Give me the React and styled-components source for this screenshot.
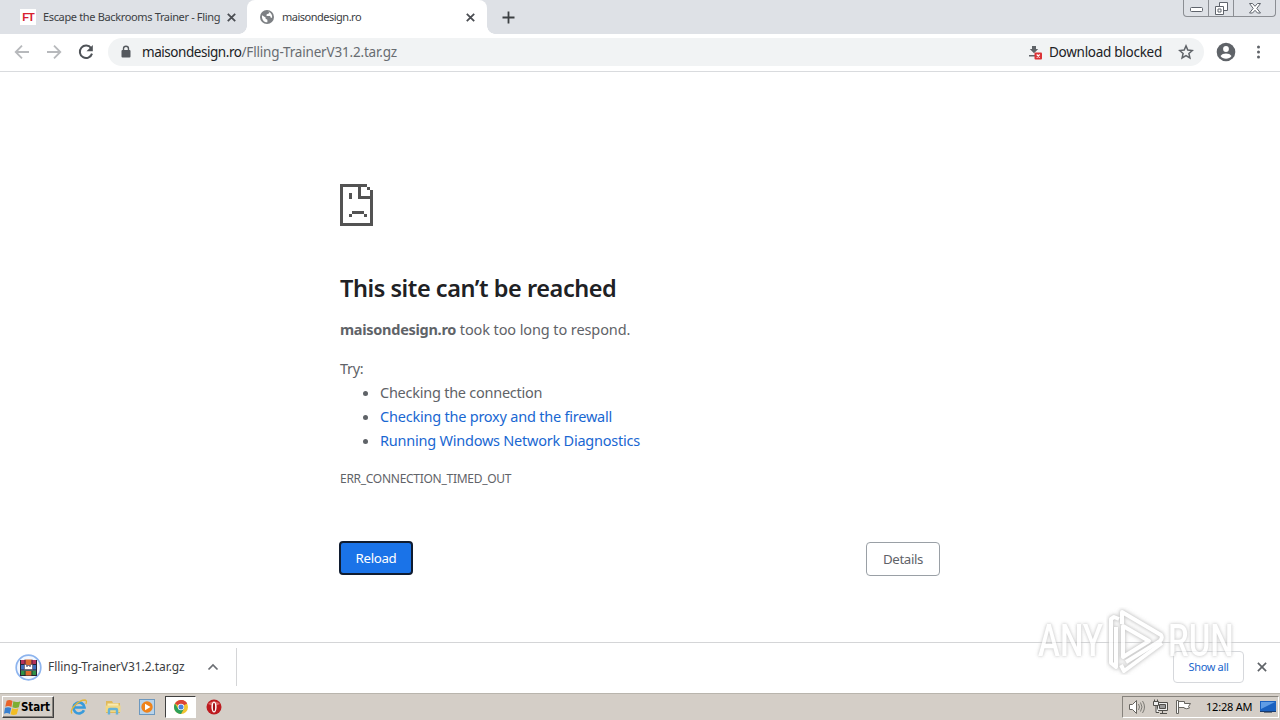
import React from "react";
import styled, { createGlobalStyle, css } from "styled-components";

const GlobalStyle = createGlobalStyle`
  * {
    box-sizing: border-box;
  }
  body {
    margin: 0;
    overflow: hidden;
    background: #fff;
    font-family: "Noto Sans", "Open Sans", sans-serif;
  }
  button {
    font-family: inherit;
    padding: 0;
    border: 0;
    background: none;
  }
  svg {
    display: block;
    flex: none;
  }
`;

const Desktop = styled.div`
  position: relative;
  display: flex;
  flex-direction: column;
  width: 1280px;
  height: 720px;
  overflow: hidden;
`;

const Label = styled.span`
  display: inline-block;
  white-space: pre;
  letter-spacing: ${(p) => p.$track || 0}px;
`;

const TabStrip = styled.div`
  display: flex;
  height: 34px;
  flex: none;
  background: #dee1e6;
`;

const Tab = styled.div`
  position: relative;
  display: flex;
  align-items: center;
  width: ${(p) => p.$width}px;
  height: 34px;
  padding: 0 ${(p) => p.$right}px 0 ${(p) => p.$left}px;
  color: #3c4043;
  font-size: 11px;
  ${(p) =>
    p.$active &&
    css`
      background: #fff;
      border-radius: 8px 8px 0 0;
      &::before,
      &::after {
        content: "";
        position: absolute;
        bottom: 0;
        width: 8px;
        height: 8px;
      }
      &::before {
        left: -8px;
        background: radial-gradient(circle at 0 0, #dee1e6 7.5px, #fff 8px);
      }
      &::after {
        right: -8px;
        background: radial-gradient(circle at 100% 0, #dee1e6 7.5px, #fff 8px);
      }
    `}
`;

const TabTitle = styled.div`
  flex: 1;
  min-width: 0;
  margin-left: ${(p) => p.$gap}px;
  line-height: 18px;
`;

const FlingIcon = styled.span`
  width: 16px;
  height: 16px;
  background: #fff;
  color: #d8202f;
  font: bold 11px/16px "Liberation Sans", sans-serif;
  letter-spacing: -1px;
  text-align: center;
`;

const NewTab = styled.button`
  display: flex;
  align-items: center;
  height: 34px;
  margin-left: 15px;
`;

const WindowButtons = styled.div`
  display: flex;
  height: 17px;
  margin: 0 4px 0 auto;
  border: 1px solid #8b8e93;
  border-top: 0;
  border-radius: 0 0 4px 4px;
`;

const WindowButton = styled.button`
  display: flex;
  align-items: center;
  justify-content: center;
  width: ${(p) => p.$width}px;
  height: 16px;
  & + & {
    border-left: 1px solid #8b8e93;
  }
`;

const Toolbar = styled.div`
  display: flex;
  align-items: center;
  height: 38px;
  flex: none;
  padding: 0 12px 1px 14px;
  border-bottom: 1px solid #d9dbde;
`;

const NavButtons = styled.div`
  display: flex;
  gap: 16px;
`;

const AddressBar = styled.div`
  display: flex;
  flex: none;
  align-items: center;
  width: 1096px;
  height: 28px;
  margin-left: 14px;
  padding: 0 10px 0 12px;
  border-radius: 14px;
  background: #f1f3f4;
  color: #202124;
  font-size: 13.5px;
  line-height: 20px;
`;

const Url = styled.div`
  flex: 1;
  margin-left: 10px;
`;

const UrlPath = styled.span`
  color: #686c71;
`;

const Blocked = styled.div`
  display: flex;
  align-items: center;
  gap: 6px;
  margin-right: 16px;
`;

const ToolbarIcons = styled.div`
  display: flex;
  align-items: center;
  gap: 16px;
  margin-left: 12px;
`;

const Page = styled.main`
  flex: 1;
  padding-top: 112px;
  color: #5f6368;
  font-size: 14.5px;
  line-height: 24px;
`;

const Content = styled.div`
  width: 600px;
  margin: 0 auto;
`;

const Heading = styled.h1`
  margin: 47px 0 0;
  color: #202124;
  font-size: 23.5px;
  font-weight: 600;
  line-height: 30px;
`;

const Summary = styled.p`
  margin: 14px 0 15px;
`;

const Suggestions = styled.ul`
  margin: 0;
  padding-left: 40px;
`;

const Link = styled.a`
  color: #1967d2;
`;

const ErrorCode = styled.div`
  margin-top: 15px;
  font-size: 12px;
`;

const Buttons = styled.div`
  display: flex;
  justify-content: space-between;
  margin-top: 51px;
`;

const PageButton = styled.button`
  width: 74px;
  height: 34px;
  border-radius: 4px;
  font-size: 13.3px;
  ${(p) =>
    p.$primary
      ? css`
          margin: -1px 0 0 -1px;
          border: 2px solid #101c30;
          background: #1a73e8;
          color: #fff;
        `
      : css`
          border: 1px solid #9aa0a6;
          background: #fff;
          color: #5f6368;
        `}
`;

const Shelf = styled.div`
  display: flex;
  align-items: center;
  height: 51px;
  flex: none;
  padding: 0 13px 2px 15px;
  border-top: 1px solid #d4d5d7;
`;

const Download = styled.div`
  display: flex;
  align-items: center;
  width: 222px;
  height: 38px;
  border-right: 1px solid #d4d5d7;
  color: #3c4043;
  font-size: 12px;
`;

const FileName = styled.div`
  width: 159px;
  margin-left: 6px;
  padding-bottom: 1px;
`;

const ShowAll = styled.button`
  width: 71px;
  height: 32px;
  margin: 0 13px 0 auto;
  padding-bottom: 2px;
  border: 1px solid #d6d8dc;
  border-radius: 4px;
  color: #1a66cc;
  font-size: 11px;
`;

const Taskbar = styled.div`
  display: flex;
  align-items: center;
  height: 27px;
  flex: none;
  padding: 0 1px 0 2px;
  border-top: 1px solid #b9b5ad;
  background: #d4cec7;
`;

const StartButton = styled.button`
  display: flex;
  align-items: center;
  width: 52px;
  height: 22px;
  padding-left: 1px;
  border: 1px solid;
  border-color: #fff #404040 #404040 #fff;
  box-shadow: inset -1px -1px #87837d;
  color: #000;
  font: bold 11.5px/20px "DejaVu Sans Condensed", "DejaVu Sans", sans-serif;
`;

const QuickLaunch = styled.div`
  display: flex;
  align-items: center;
  margin-left: 8px;
`;

const TaskButton = styled.div`
  display: flex;
  align-items: center;
  justify-content: center;
  width: 34px;
  height: 22px;
  ${(p) =>
    p.$active &&
    css`
      width: 31px;
      margin: 0 1px;
      border: 1px solid;
      border-color: #404040 #fff #fff #404040;
      background: #fff;
    `}
`;

const Tray = styled.div`
  display: flex;
  align-items: center;
  width: 157px;
  height: 22px;
  margin-left: auto;
  padding-left: 5px;
  border: 1px solid;
  border-color: #87837d #fff #fff #87837d;
  color: #000;
  font-size: 11px;
`;

const TrayIcons = styled.div`
  display: flex;
  gap: 6px;
`;

const Clock = styled.span`
  margin: 0 8px 1px 14px;
`;

const Watermark = styled.div`
  position: absolute;
  top: 607px;
  left: 1038px;
  display: flex;
  align-items: center;
  height: 68px;
  color: #fff;
  pointer-events: none;
`;

const WatermarkWord = styled.span`
  width: ${(p) => p.$width}px;
  white-space: nowrap;
  font: 500 44px/68px Roboto, sans-serif;
  text-shadow: 0 0 3px #bbb, 0 0 5px #ccc;
  opacity: 0.75;
  transform: scaleX(0.75);
  transform-origin: 0 50%;
`;

const CloseIcon = ({ size = 9, color = "#4a4d52", weight = 1.8 }) => (
  <svg width={size} height={size} viewBox="0 0 9 9">
    <path d="M.8.8l7.4 7.4M8.2.8L.8 8.2" stroke={color} strokeWidth={weight} />
  </svg>
);

const GlobeIcon = () => (
  <svg width="14" height="14" viewBox="0 0 14 14">
    <circle cx="7" cy="7" r="7" fill="#7d8084" />
    <path
      d="M2 5.2l3.6 2.2v1.4l1.8 1v2.4C4 12.5 1.5 9.5 2 5.2zM6.3 1.7l3 .1-.5 1.8-2.1.6-.2 1.7 3.6.2.7 1.7 1.3-.1c.4-2.600-1-5-3.300-5.700-1-.4-1.800-.4-2.500-.3z"
      fill="#fff"
    />
  </svg>
);

const ArrowIcon = ({ flip }) => (
  <svg
    width="16"
    height="16"
    viewBox="0 0 16 16"
    transform={flip ? "scale(-1 1)" : undefined}
  >
    <path
      d="M15 8H2M8 1.700L1.700 8 8 14.300"
      fill="none"
      stroke="#b7b9bc"
      strokeWidth="1.800"
    />
  </svg>
);

const ReloadIcon = () => (
  <svg width="16" height="16" viewBox="0 0 16 16">
    <path
      d="M13.100 4.200A6.200 6.200 0 1 0 14 9.600"
      fill="none"
      stroke="#4f5358"
      strokeWidth="2"
    />
    <path d="M14.800 1v6.300H8.500z" fill="#4f5358" />
  </svg>
);

const LockIcon = () => (
  <svg width="12" height="14" viewBox="0 0 12 14">
    <path d="M3.500 6V3.800a2.500 2.500 0 0 1 5 0V6" fill="none" stroke="#55595e" strokeWidth="1.400" />
    <rect x="1.500" y="5" width="9" height="7.500" rx="1" fill="#55595e" />
  </svg>
);

const BlockedIcon = () => (
  <svg width="15" height="16" viewBox="0 0 15 16">
    <path d="M4 2h4v3h2.200L6 9.300 1.800 5H4zM1 11h6v1.500H1z" fill="#5f6368" />
    <rect x="6.500" y="8.500" width="7.500" height="7" rx="1" fill="#db3236" />
    <path d="M8.700 10.500l3 3m0-3l-3 3" stroke="#fff" strokeWidth="1.100" />
  </svg>
);

const StarIcon = () => (
  <svg width="16" height="16" viewBox="0 0 16 16">
    <path
      d="M8 1.900l1.800 4.200 4.500.4-3.400 3 1 4.400L8 11.600l-3.900 2.300 1-4.400-3.400-3 4.500-.4z"
      fill="none"
      stroke="#5f6368"
      strokeWidth="1.500"
    />
  </svg>
);

const AvatarIcon = () => (
  <svg width="20" height="20" viewBox="0 0 20 20">
    <circle cx="10" cy="10" r="9.300" fill="#5f6368" />
    <circle cx="10" cy="7" r="2.900" fill="#fff" />
    <path d="M4.500 14c1-1.900 3.400-2.600 5.500-2.600s4.500.7 5.500 2.600c-1.200 1.700-3.200 2.800-5.500 2.800S5.700 15.700 4.500 14z" fill="#fff" />
  </svg>
);

const MenuIcon = () => (
  <svg width="16" height="16" viewBox="0 0 16 16" fill="#5f6368">
    <circle cx="6.500" cy="3" r="1.500" />
    <circle cx="6.500" cy="8" r="1.500" />
    <circle cx="6.500" cy="13" r="1.500" />
  </svg>
);

const SadPageIcon = () => (
  <svg width="33" height="42" viewBox="0 0 11 14" fill="#535353" shapeRendering="crispEdges">
    <path d="M0 0h9v1H7v3h3V2h1v12H0zM1 1v12h9V5H6V1z" fillRule="evenodd" />
    <path d="M9 1h1v1H9zM3 3h1v2H3zM4 9h4v1H4zM3 10h1v1H3zM8 10h1v1H8z" />
  </svg>
);

const ArchiveIcon = () => (
  <svg width="27" height="27" viewBox="0 0 27 27">
    <circle cx="13.500" cy="13.500" r="12.300" fill="#f4f8ff" stroke="#8db4ee" strokeWidth="1.700" />
    <path d="M5.500 6h16v5h-16z" fill="#b5305a" />
    <path d="M5.500 11h16v5.500h-16z" fill="#3f6fc0" />
    <path d="M5.500 16.500h16v5h-16z" fill="#2f9148" />
    <path d="M5 10.500h17M5 16h17M5 21.500h17M5.500 6v15M21.500 6v15" stroke="#292332" />
    <path d="M10.500 5.500h6V11h-6zM10.500 17h6v4.500h-6z" fill="#dd6a30" />
    <path d="M10 5.500V11M17 5.500V11M10 17v5M17 17v5" stroke="#211d30" opacity=".7" />
    <path d="M9.500 10.500v5h8v-5h-2v2h-1v-1h-2v1h-1v-2z" fill="#fff" stroke="#55323c" strokeWidth=".5" />
  </svg>
);

const StartIcon = () => (
  <svg width="17" height="17" viewBox="0 0 16 16">
    <path d="M2.500 1.700Q5 0 8 1.800L7 7.500Q4 6 1.200 7.300z" fill="#e96329" />
    <path d="M8.800 2.100q3 1.600 6.600-.1l-1.500 5.800q-3 1.400-6 0z" fill="#7dae32" />
    <path d="M1 8.300q3-1.300 5.800.1l-1.300 5.600Q3 12.600 0 13.800z" fill="#3980cf" />
    <path d="M7.600 8.700q2.800 1.400 6 .1L12 14.300q-3 1.500-5.800.1z" fill="#f2bd24" />
  </svg>
);

const ExplorerIcon = () => (
  <svg width="18" height="18" viewBox="0 0 18 18">
    <path d="M14 12.300A5.500 5.500 0 1 1 14.500 9.500H5" fill="none" stroke="#389bdb" strokeWidth="2.700" />
    <path d="M2 15.500C-1 12 8 2 15 2c2 .5 1.500 2.500.8 4" fill="none" stroke="#e3b63c" strokeWidth="1.300" />
  </svg>
);

const FolderIcon = () => (
  <svg width="18" height="18" viewBox="0 0 18 18">
    <path d="M2 3h6l1 2h7v10H2z" fill="#e0b95a" />
    <path d="M3.500 5.500h11V9h-11z" fill="#f9eab0" />
    <path d="M1.500 7.500h15V14h-15z" fill="#f1d883" />
    <path d="M5 16.500V12q0-1 1-1h6q1 0 1 1v4.500" fill="none" stroke="#65b2d7" strokeWidth="2.400" />
  </svg>
);

const PlayerIcon = () => (
  <svg width="16" height="16" viewBox="0 0 16 16">
    <rect x=".5" y=".5" width="15" height="15" fill="#b8d3ea" stroke="#6c98bf" />
    <circle cx="8" cy="8" r="5.700" fill="#ef831b" />
    <path d="M6 4.700L11.500 8 6 11.300z" fill="#fff" />
  </svg>
);

const ChromeIcon = () => (
  <svg width="14" height="14" viewBox="0 0 14 14">
    <circle cx="7" cy="7" r="7" fill="#f2c431" />
    <path d="M7 7L.94 3.500A7 7 0 0 1 13.060 3.500z" fill="#dc4437" />
    <path d="M7 0a7 7 0 0 1 6.060 3.500H7z" fill="#dc4437" />
    <path d="M.94 3.500A7 7 0 0 0 7 14l2.800-5L4 8.500z" fill="#2da05a" />
    <circle cx="7" cy="7" r="3.200" fill="#fff" />
    <circle cx="7" cy="7" r="2.500" fill="#4a83dd" />
  </svg>
);

const OperaIcon = () => (
  <svg width="16" height="16" viewBox="0 0 16 16">
    <circle cx="8" cy="8" r="7.500" fill="#bd1b20" />
    <path d="M2 5a7 5 0 0 1 12 0q-6 3-12 0z" fill="#df6363" />
    <ellipse cx="8" cy="8" rx="2.600" ry="5.500" fill="#fff" />
    <ellipse cx="8" cy="8" rx="1.100" ry="4.300" fill="#a21018" />
  </svg>
);

const SpeakerIcon = () => (
  <svg width="18" height="16" viewBox="0 0 18 16" fill="none" stroke="#66645f">
    <path d="M1.500 5.500h3l4-4v13l-4-4h-3z" fill="#fff" />
    <path d="M10.500 5q2 3 0 6M12.500 3.500q3 4.500 0 9M14.500 2q4 6 0 12" strokeWidth=".8" />
  </svg>
);

const NetworkIcon = () => (
  <svg width="17" height="16" viewBox="0 0 17 16" fill="#eee" stroke="#504e4a">
    <path d="M5.500 3.500h10v8h-10z" />
    <path d="M7.500 5.500h6v4h-6z" fill="#999" />
    <path d="M8 14.500h7M10.500 12v2" />
    <path d="M1.500 2.500h5v4h-5zM2.500.5v2M5.500.5v2M4 7v6.500h3" />
  </svg>
);

const FlagIcon = () => (
  <svg width="17" height="16" viewBox="0 0 17 16" fill="#fff" stroke="#66645f">
    <path d="M3.500 2.500h6v2h6l-2 3 1 1.500q-3 1.500-5.500 0V8.500h-5.500z" />
    <path d="M1.500 1.500h2v13h-2z" />
  </svg>
);

const DesktopIcon = () => (
  <svg width="16" height="14" viewBox="0 0 16 14">
    <path d="M0 1h16v10H0z" fill="#1b62c0" />
    <path d="M1 2h14L1 9z" fill="#609de5" />
    <path d="M0 11h16v1H0z" fill="#173b70" />
    <path d="M4 12h8v1H4z" fill="#71767e" />
  </svg>
);

const WatermarkGlow = styled.g`
  filter: drop-shadow(0 0 1.5px #bbb) drop-shadow(0 0 2px #ccc);
`;

const WatermarkLogo = () => (
  <svg width="62" height="68" viewBox="0 0 62 68" fill="none" strokeLinejoin="round">
    <WatermarkGlow stroke="#fff" strokeWidth="4" opacity=".8">
      <path d="M13 12l-5-2-3 2v44l5 4V20" />
      <path d="M17 47V19l26 15L17 50z" />
      <path d="M16 17V5l39 23q2 3-1 6L20 55" />
      <path d="M15 58l3 6 38-28" />
    </WatermarkGlow>
  </svg>
);

function Browser() {
  return (
    <>
      <TabStrip>
        <Tab $width={247} $left={20} $right={11}>
          <FlingIcon>FT</FlingIcon>
          <TabTitle $gap={7}>
            <Label $track={-0.35}>Escape the Backrooms Trainer - Fling</Label>
          </TabTitle>
          <CloseIcon />
        </Tab>
        <Tab $active $width={240} $left={13} $right={12}>
          <GlobeIcon />
          <TabTitle $gap={8}>
            <Label $track={-0.5}>maisondesign.ro</Label>
          </TabTitle>
          <CloseIcon />
        </Tab>
        <NewTab>
          <svg width="13" height="13" viewBox="0 0 13 13">
            <path d="M6.500.5v12M.5 6.500h12" stroke="#3c4043" strokeWidth="1.800" />
          </svg>
        </NewTab>
        <WindowButtons>
          <WindowButton $width={24}>
            <svg width="13" height="8" viewBox="0 0 13 8">
              <rect x=".5" y="3.500" width="12" height="4" rx="1" fill="#fff" stroke="#5f646c" />
            </svg>
          </WindowButton>
          <WindowButton $width={25}>
            <svg width="13" height="13" viewBox="0 0 13 13" fill="#fff" stroke="#5f646c">
              <path d="M4.500.5h8v8h-8z" />
              <path d="M.5 4.500h8v8h-8zM3 7h3v3H3z" />
            </svg>
          </WindowButton>
          <WindowButton $width={42}>
            <svg width="12" height="11" viewBox="0 0 12 11">
              <path
                d="M.5.500h3L6 3.300 8.500.500h3L7.800 5.400l3.700 4.600h-3L6 7.300 3.500 10h-3l3.700-4.600z"
                fill="#fff"
                stroke="#5f646c"
              />
            </svg>
          </WindowButton>
        </WindowButtons>
      </TabStrip>
      <Toolbar>
        <NavButtons>
          <ArrowIcon />
          <ArrowIcon flip />
          <ReloadIcon />
        </NavButtons>
        <AddressBar>
          <LockIcon />
          <Url>
            <Label $track={-0.45}>maisondesign.ro</Label>
            <UrlPath>
              <Label $track={-0.18}>/Flling-TrainerV31.2.tar.gz</Label>
            </UrlPath>
          </Url>
          <Blocked>
            <BlockedIcon />
            <Label $track={-0.27}>Download blocked</Label>
          </Blocked>
          <StarIcon />
        </AddressBar>
        <ToolbarIcons>
          <AvatarIcon />
          <MenuIcon />
        </ToolbarIcons>
      </Toolbar>
    </>
  );
}

function ErrorPage() {
  return (
    <Page>
      <Content>
        <SadPageIcon />
        <Heading>
          <Label $track={-0.45}>This site can’t be reached</Label>
        </Heading>
        <Summary>
          <Label as="strong" $track={-0.28}>maisondesign.ro</Label>
          <Label $track={-0.1}> took too long to respond.</Label>
        </Summary>
        <Label $track={-0.3}>Try:</Label>
        <Suggestions>
          <li>
            <Label $track={-0.25}>Checking the connection</Label>
          </li>
          <li>
            <Link>
              <Label $track={-0.22}>Checking the proxy and the firewall</Label>
            </Link>
          </li>
          <li>
            <Link>
              <Label $track={-0.23}>Running Windows Network Diagnostics</Label>
            </Link>
          </li>
        </Suggestions>
        <ErrorCode>
          <Label $track={-0.28}>ERR_CONNECTION_TIMED_OUT</Label>
        </ErrorCode>
        <Buttons>
          <PageButton $primary>
            <Label $track={-0.35}>Reload</Label>
          </PageButton>
          <PageButton>
            <Label $track={-0.35}>Details</Label>
          </PageButton>
        </Buttons>
      </Content>
    </Page>
  );
}

function DownloadShelf() {
  return (
    <Shelf>
      <Download>
        <ArchiveIcon />
        <FileName>
          <Label $track={-0.05}>Flling-TrainerV31.2.tar.gz</Label>
        </FileName>
        <svg width="12" height="8" viewBox="0 0 12 8">
          <path d="M1.500 6.500L6 2l4.500 4.500" fill="none" stroke="#6b6e73" strokeWidth="1.700" />
        </svg>
      </Download>
      <ShowAll>
        <Label $track={-0.35}>Show all</Label>
      </ShowAll>
      <CloseIcon size={10} color="#5f6368" weight={1.5} />
    </Shelf>
  );
}

export default function App() {
  return (
    <Desktop>
      <GlobalStyle />
      <Browser />
      <ErrorPage />
      <DownloadShelf />
      <Taskbar>
        <StartButton>
          <StartIcon />
          <Label $track={-0.1}>Start</Label>
        </StartButton>
        <QuickLaunch>
          <TaskButton>
            <ExplorerIcon />
          </TaskButton>
          <TaskButton>
            <FolderIcon />
          </TaskButton>
          <TaskButton>
            <PlayerIcon />
          </TaskButton>
          <TaskButton $active>
            <ChromeIcon />
          </TaskButton>
          <TaskButton>
            <OperaIcon />
          </TaskButton>
        </QuickLaunch>
        <Tray>
          <TrayIcons>
            <SpeakerIcon />
            <NetworkIcon />
            <FlagIcon />
          </TrayIcons>
          <Clock>
            <Label $track={-0.2}>12:28 AM</Label>
          </Clock>
          <DesktopIcon />
        </Tray>
      </Taskbar>
      <Watermark>
        <WatermarkWord $width={68}>ANY</WatermarkWord>
        <WatermarkLogo />
        <WatermarkWord $width={68}>RUN</WatermarkWord>
      </Watermark>
    </Desktop>
  );
}
